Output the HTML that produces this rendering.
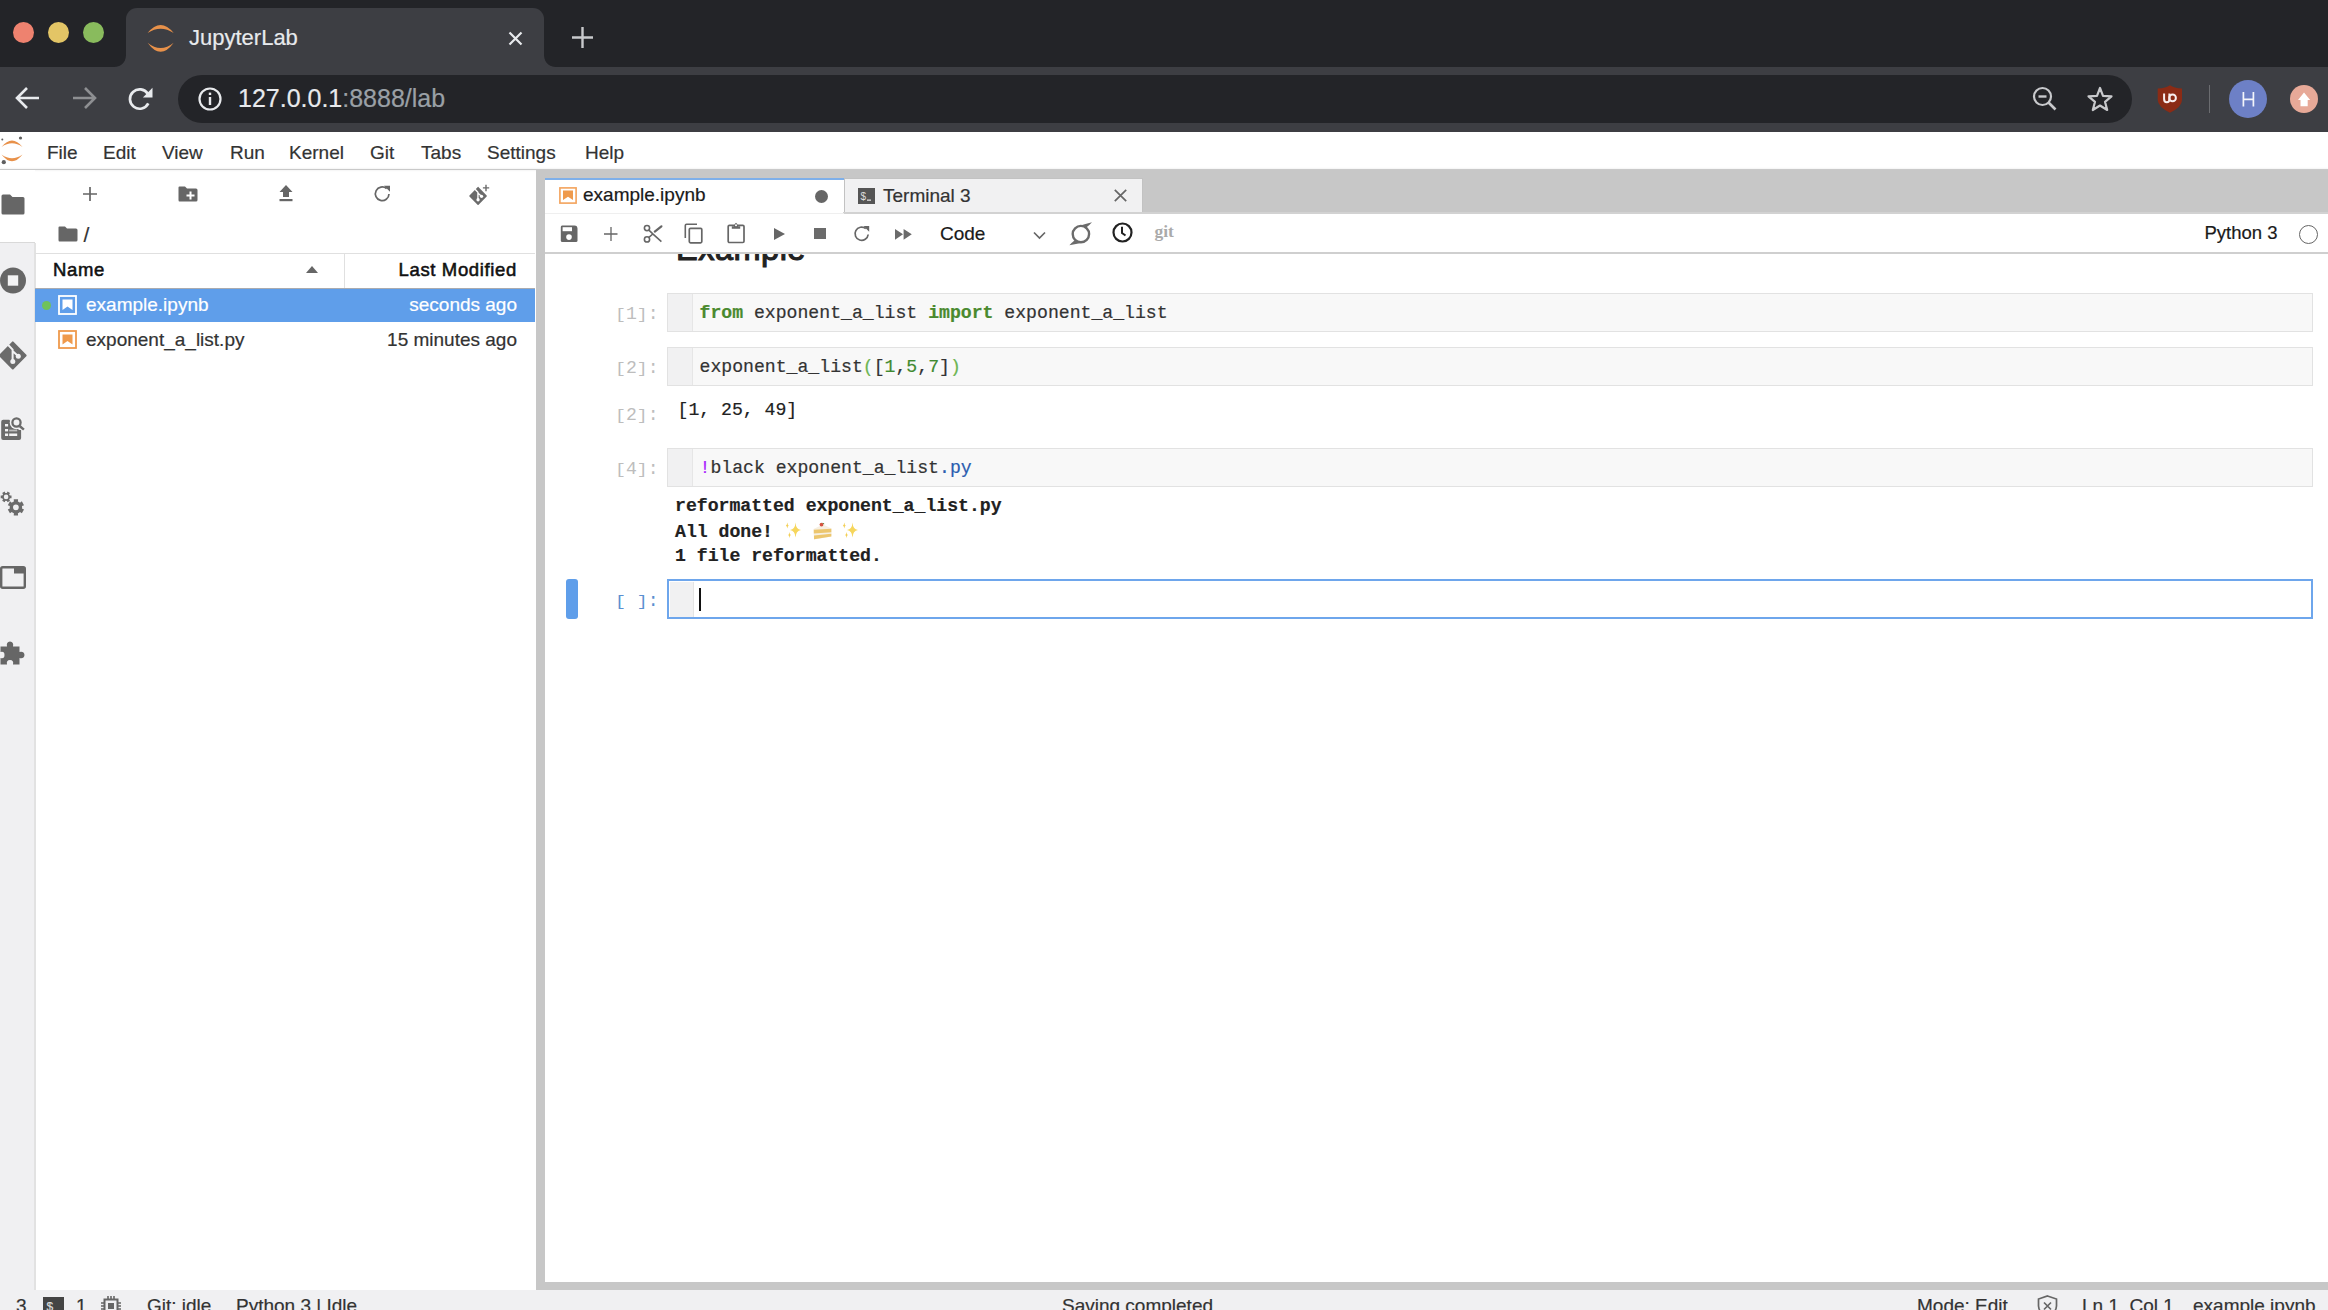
<!DOCTYPE html>
<html><head><meta charset="utf-8">
<style>
*{box-sizing:border-box;margin:0;padding:0}
html,body{width:2328px;height:1310px;overflow:hidden;background:#fff;font-family:"Liberation Sans",sans-serif}
.a{position:absolute}
svg{position:absolute;overflow:visible}
.ui{font-size:19px;color:#333;white-space:pre;line-height:1;-webkit-text-stroke:0.2px currentColor}
.hd{font-size:18.5px;color:#111;letter-spacing:0.65px;-webkit-text-stroke:0.55px #111}
.mono{font-family:"Liberation Mono",monospace;white-space:pre;line-height:1;font-size:18.15px;-webkit-text-stroke:0.2px currentColor}
.pr{color:#bdbdbd;-webkit-text-stroke:0}
.pr b{display:inline-block;font-weight:400;transform:scaleY(0.85);transform-origin:50% 62%}
.box{left:667px;width:1646px;background:#f8f8f8;border:1.4px solid #e2e2e2}
.gut{position:absolute;left:0;top:0;width:25px;height:100%;background:#f1f1f2;border-right:1px solid #e6e6e6}
.code{color:#333}
.kw{color:#4a8a2f;font-weight:700}
.nu{color:#3f8a30}
.br{color:#6cb552}
.out{color:#212121}
</style></head><body>
<!-- ============ CHROME ============ -->
<div class="a" style="left:0;top:0;width:2328px;height:67px;background:#232428"></div>
<!-- traffic lights -->
<div class="a" style="left:12.5px;top:21.5px;width:21px;height:21px;border-radius:50%;background:#ee826f"></div>
<div class="a" style="left:47.5px;top:21.5px;width:21px;height:21px;border-radius:50%;background:#e3c566"></div>
<div class="a" style="left:82.5px;top:21.5px;width:21px;height:21px;border-radius:50%;background:#89bb5d"></div>
<!-- active tab -->
<div class="a" style="left:126px;top:8px;width:418px;height:60px;background:#3d3e43;border-radius:11px 11px 0 0"></div>
<div class="a" style="left:115px;top:56px;width:11px;height:11px;background:radial-gradient(circle 11px at 0 0,#232428 10.4px,#3d3e43 11.2px)"></div>
<div class="a" style="left:544px;top:56px;width:11px;height:11px;background:radial-gradient(circle 11px at 100% 0,#232428 10.4px,#3d3e43 11.2px)"></div>
<svg style="left:146px;top:24px" width="28" height="28" viewBox="0 0 28 28">
 <path d="M1.6 9.1 Q14.6 -6.9 27.7 9.1 Q14.6 0.5 1.6 9.1Z" fill="#e8914a"/>
 <path d="M1.6 18.75 Q14.6 36.85 27.7 18.75 Q14.6 29.45 1.6 18.75Z" fill="#e8914a"/>
</svg>
<div class="a ui" style="left:189px;top:27px;font-size:22px;color:#e8eaed">JupyterLab</div>
<svg style="left:508px;top:31px" width="15" height="15" viewBox="0 0 15 15"><path d="M1.5 1.5L13.5 13.5M13.5 1.5L1.5 13.5" stroke="#e8eaed" stroke-width="2.2"/></svg>
<svg style="left:572px;top:27px" width="21" height="21" viewBox="0 0 21 21"><path d="M10.5 0V21M0 10.5H21" stroke="#c8c9cc" stroke-width="2.4"/></svg>
<!-- toolbar -->
<div class="a" style="left:0;top:67px;width:2328px;height:65px;background:#3d3e43"></div>
<svg style="left:15px;top:86px" width="26" height="24" viewBox="0 0 26 24"><path d="M24 12H3M12 2L2 12L12 22" stroke="#e8eaed" stroke-width="2.6" fill="none"/></svg>
<svg style="left:71px;top:86px" width="26" height="24" viewBox="0 0 26 24"><path d="M2 12H23M14 2L24 12L14 22" stroke="#8e8f92" stroke-width="2.6" fill="none"/></svg>
<svg style="left:127px;top:86px" width="26" height="26" viewBox="0 0 26 26"><path d="M21.3 17.4A9.7 9.7 0 1 1 20.8 7.75" stroke="#e8eaed" stroke-width="2.7" fill="none"/><path d="M25.5 1.8L25.5 11.4L15.9 11.4Z" fill="#e8eaed"/></svg>
<div class="a" style="left:178px;top:75px;width:1954px;height:48px;border-radius:24px;background:#232428"></div>
<svg style="left:198px;top:87px" width="24" height="24" viewBox="0 0 24 24"><circle cx="12" cy="12" r="10.5" stroke="#e8eaed" stroke-width="2.2" fill="none"/><rect x="10.8" y="10" width="2.4" height="8" fill="#e8eaed"/><rect x="10.8" y="5.6" width="2.4" height="2.4" fill="#e8eaed"/></svg>
<div class="a ui" style="left:238px;top:86px;font-size:25px;color:#e8eaed">127.0.0.1<span style="color:#9aa0a6">:8888/lab</span></div>
<svg style="left:2032px;top:86.2px" width="26" height="26" viewBox="0 0 26 26"><circle cx="10.5" cy="10.5" r="8.5" stroke="#c8c9cc" stroke-width="2.2" fill="none"/><path d="M6.5 10.5H14.5" stroke="#c8c9cc" stroke-width="2.4"/><path d="M16.5 16.5L23.5 23.5" stroke="#c8c9cc" stroke-width="2.6"/></svg>
<svg style="left:2087px;top:86px" width="26" height="25" viewBox="0 0 26 25"><path d="M13 2L16 9.8L24.5 10.3L18 15.8L20.2 24L13 19.5L5.8 24L8 15.8L1.5 10.3L10 9.8Z" stroke="#c8c9cc" stroke-width="2.2" fill="none" stroke-linejoin="round"/></svg>
<svg style="left:2157px;top:85px" width="26" height="28" viewBox="0 0 26 28"><path d="M13 0.3Q17 3.4 25 3.4V15Q25 22 13 27.7Q1 22 0.7 15V3.4Q9 3.4 13 0.3Z" fill="#8b2b15"/><path d="M7.1 8.6V14Q7.1 17.3 9.9 17.3Q12.4 17.3 12.4 14V8.6" stroke="#f8eeee" stroke-width="2" fill="none"/><circle cx="15.6" cy="12.9" r="3.3" stroke="#f8eeee" stroke-width="2" fill="none"/></svg>
<div class="a" style="left:2208.5px;top:85px;width:1.5px;height:28px;background:#6b6c70"></div>
<div class="a" style="left:2229.3px;top:80px;width:38px;height:38px;border-radius:50%;background:#6d80c6"></div>
<svg style="left:2242px;top:92px" width="13" height="15" viewBox="0 0 13 15"><path d="M1.4 0V14.5M11.4 0V14.5M1.4 7.3H11.4" stroke="#f4f5fb" stroke-width="1.7"/></svg>
<div class="a" style="left:2290px;top:85px;width:28px;height:28px;border-radius:50%;background:#e7a998"></div>
<svg style="left:2296px;top:91px" width="16" height="16" viewBox="0 0 16 16"><path d="M8 1.4L14.2 9H11.7V15.3H4.5V9H2Z" fill="#fff"/></svg>

<!-- ============ JUPYTERLAB ============ -->
<div id="jl" class="a" style="left:0;top:132px;width:2328px;height:1178px;background:#fff"></div>
<!-- menubar -->
<svg style="left:0;top:136px" width="24" height="30" viewBox="0 0 24 30">
 <path d="M1.5 11 Q12 -2 22.5 11 Q12 3.5 1.5 11Z" fill="#e8914a"/>
 <path d="M1.5 18.5 Q12 32 22.5 18.5 Q12 26 1.5 18.5Z" fill="#e8914a"/>
 <circle cx="20.5" cy="2" r="1.6" fill="#5f5f5f"/><circle cx="2.3" cy="3.5" r="1" fill="#5f5f5f"/><circle cx="3.8" cy="26.2" r="2.1" fill="#5f5f5f"/>
</svg>
<div class="a ui" style="left:47px;top:142.5px;color:#333">File</div>
<div class="a ui" style="left:103px;top:142.5px;color:#333">Edit</div>
<div class="a ui" style="left:162px;top:142.5px;color:#333">View</div>
<div class="a ui" style="left:230px;top:142.5px;color:#333">Run</div>
<div class="a ui" style="left:289px;top:142.5px;color:#333">Kernel</div>
<div class="a ui" style="left:370px;top:142.5px;color:#333">Git</div>
<div class="a ui" style="left:421px;top:142.5px;color:#333">Tabs</div>
<div class="a ui" style="left:487px;top:142.5px;color:#333">Settings</div>
<div class="a ui" style="left:585px;top:142.5px;color:#333">Help</div>
<div class="a" style="left:0;top:169px;width:2328px;height:1px;background:#c9c9c9;box-shadow:0 0 2px #d8d8d8"></div>

<!-- left sidebar -->
<div class="a" style="left:0;top:170px;width:35px;height:1120px;background:#f0f0f2"></div>
<div class="a" style="left:0;top:170px;width:35px;height:73px;background:#fff;border-bottom:1.5px solid #d9d9d9"></div>
<div class="a" style="left:34px;top:243px;width:1.5px;height:1047px;background:#e2e2e2"></div>
<!-- sidebar icons -->
<svg style="left:1px;top:194px" width="24" height="21" viewBox="0 0 24 21"><path d="M2 0.5H9L11.5 3H22Q23.5 3 23.5 4.5V19Q23.5 20.5 22 20.5H2Q0.5 20.5 0.5 19V2Q0.5 0.5 2 0.5Z" fill="#666666"/></svg>
<svg style="left:0;top:267px" width="27" height="27" viewBox="0 0 27 27"><circle cx="13" cy="13.5" r="13" fill="#666666"/><rect x="7.8" y="8.3" width="10.4" height="10.4" fill="#f3f3f4"/></svg>
<svg style="left:0;top:335px" width="30" height="40" viewBox="0 0 30 40"><path d="M12.8 7.4L25.6 20.5L12.8 33.5L0 20.5Z" fill="#6b6b6b" stroke="#6b6b6b" stroke-width="2" stroke-linejoin="round"/><path d="M8 9.8L12.6 14.6V26.4M12.8 16.3L18.3 21.2" stroke="#f0f0f2" stroke-width="2" fill="none"/><circle cx="12.8" cy="26.6" r="2.5" fill="#f0f0f2"/><circle cx="18.3" cy="21.2" r="2.5" fill="#f0f0f2"/></svg>
<svg style="left:0;top:410px" width="30" height="40" viewBox="0 0 30 40"><path d="M1.2 11.8Q1.2 9.8 3.2 9.8H9.2L19 20H21.1V28.1Q21.1 30.1 19.1 30.1H3.2Q1.2 30.1 1.2 28.1Z" fill="#6b6b6b"/><g fill="#f3f3f4"><rect x="5" y="14" width="3.1" height="2.5"/><rect x="5" y="19" width="3.1" height="2.4"/><rect x="5" y="23.5" width="3.1" height="2.5"/><rect x="9.2" y="19.6" width="8" height="1.8" opacity="0.6"/><rect x="9.2" y="23.5" width="8" height="2.5"/></g><circle cx="16.5" cy="12.5" r="6.8" fill="#f3f3f4"/><path d="M19.3 15.6L25 20.4" stroke="#f3f3f4" stroke-width="4.5"/><circle cx="16.5" cy="12.5" r="4.1" stroke="#6b6b6b" stroke-width="2.3" fill="none"/><path d="M19.6 16L23.9 19.6" stroke="#6b6b6b" stroke-width="2.5"/></svg>
<svg style="left:0;top:485px" width="30" height="40" viewBox="0 0 30 40"><path d="M9.56 9.90 L9.89 10.61 L11.51 10.45 L11.51 13.35 L9.89 13.19 L9.56 13.90 L9.11 14.54 L10.06 15.86 L7.55 17.31 L6.88 15.82 L6.10 15.90 L5.32 15.82 L4.65 17.31 L2.14 15.86 L3.09 14.54 L2.64 13.90 L2.31 13.19 L0.69 13.35 L0.69 10.45 L2.31 10.61 L2.64 9.90 L3.09 9.26 L2.14 7.94 L4.65 6.49 L5.32 7.98 L6.10 7.90 L6.88 7.98 L7.55 6.49 L10.06 7.94 L9.11 9.26ZM8.40 11.90A2.3 2.3 0 1 0 3.80 11.90A2.3 2.3 0 1 0 8.40 11.90Z" fill="#6b6b6b" fill-rule="evenodd"/><path d="M19.00 27.67 L17.89 28.17 L18.07 30.41 L13.73 30.41 L13.91 28.17 L12.80 27.67 L11.81 26.96 L9.96 28.24 L7.79 24.47 L9.82 23.51 L9.70 22.30 L9.82 21.09 L7.79 20.13 L9.96 16.36 L11.81 17.64 L12.80 16.93 L13.91 16.43 L13.73 14.19 L18.07 14.19 L17.89 16.43 L19.00 16.93 L19.99 17.64 L21.84 16.36 L24.01 20.13 L21.98 21.09 L22.10 22.30 L21.98 23.51 L24.01 24.47 L21.84 28.24 L19.99 26.96ZM18.80 22.30A2.9 2.9 0 1 0 13.00 22.30A2.9 2.9 0 1 0 18.80 22.30Z" fill="#6b6b6b" fill-rule="evenodd"/></svg>
<svg style="left:0;top:566px" width="26" height="23" viewBox="0 0 26 23"><rect x="1.2" y="1.2" width="23.6" height="20.6" rx="1.5" stroke="#666666" stroke-width="2.4" fill="none"/><rect x="14" y="1" width="11" height="6.5" fill="#666666"/></svg>
<svg style="left:0;top:639px" width="26" height="26" viewBox="0 0 26 26"><path d="M0.5 7.5H7Q6 3 10 2.5Q14 3 13 7.5H19.5V13Q24 12 24.5 16Q24 20 19.5 19V25.5H13Q14 21 10 21Q6 21 7 25.5H0.5V19Q4.5 20 4.5 16Q4.5 12 0.5 13Z" fill="#666666"/></svg>

<!-- file browser -->
<svg style="left:83px;top:187px" width="14" height="14" viewBox="0 0 14 14"><path d="M7 0V14M0 7H14" stroke="#666666" stroke-width="1.7"/></svg>
<svg style="left:178px;top:186px" width="20" height="16" viewBox="0 0 20 16"><path d="M1.5 0.5H7L9 2.5H18Q19.5 2.5 19.5 4V14Q19.5 15.5 18 15.5H1.5Q0.5 15.5 0.5 14V1.5Q0.5 0.5 1.5 0.5Z" fill="#666666"/><path d="M12.5 5.5V13.5M8.5 9.5H16.5" stroke="#fff" stroke-width="2"/></svg>
<svg style="left:279px;top:185px" width="14" height="17" viewBox="0 0 14 17"><path d="M7 0L13.5 7H10V12H4V7H0.5Z" fill="#666666"/><rect x="0.5" y="14" width="13" height="2.2" fill="#666666"/></svg>
<svg style="left:374px;top:185px" width="18" height="17" viewBox="0 0 18 17"><path d="M15 9A6.8 6.8 0 1 1 12.6 3.6" stroke="#666666" stroke-width="1.7" fill="none"/><path d="M10 0.8H16V6.8Z" fill="#666666"/></svg>
<svg style="left:470.3px;top:183.1px" width="26" height="26" viewBox="0 0 26 26"><g transform="scale(0.63)"><path d="M12.8 7.4L25.6 20.5L12.8 33.5L0 20.5Z" fill="#6b6b6b" stroke="#6b6b6b" stroke-width="2.4" stroke-linejoin="round"/><path d="M8 9.8L12.6 14.6V26.4M12.8 16.3L18.3 21.2" stroke="#fff" stroke-width="2.2" fill="none"/><circle cx="12.8" cy="26.6" r="2.6" fill="#fff"/><circle cx="18.3" cy="21.2" r="2.6" fill="#fff"/></g><path d="M16 1.8V8.2M12.9 4.9H19.2" stroke="#6b6b6b" stroke-width="1.4"/></svg>
<svg style="left:57.5px;top:226px" width="20" height="16" viewBox="0 0 20 16"><path d="M1.5 0.5H7L9 2.5H18Q19.5 2.5 19.5 4V14Q19.5 15.5 18 15.5H1.5Q0.5 15.5 0.5 14V1.5Q0.5 0.5 1.5 0.5Z" fill="#666666"/></svg>
<div class="a ui" style="left:83.5px;top:223.5px;color:#333;font-size:21px">/</div>
<div class="a" style="left:35px;top:253px;width:500px;height:1px;background:#e0e0e0"></div>
<div class="a ui hd" style="left:53px;top:261px">Name</div>
<svg style="left:306px;top:266px" width="12" height="7" viewBox="0 0 12 7"><path d="M0 7L6 0L12 7Z" fill="#666666"/></svg>
<div class="a" style="left:344px;top:254px;width:1px;height:34px;background:#e0e0e0"></div>
<div class="a ui hd" style="left:335px;top:261px;width:182px;text-align:right;margin-right:-0.6px">Last Modified</div>
<div class="a" style="left:35px;top:287.5px;width:500px;height:1.5px;background:#a9abb0"></div>
<div class="a" style="left:35px;top:289px;width:500px;height:33px;background:#5f9eea"></div>
<div class="a" style="left:42px;top:301px;width:9px;height:9px;border-radius:50%;background:#6fc25b"></div>
<svg style="left:58px;top:295px" width="19" height="20" viewBox="0 0 19 20"><rect x="1" y="1" width="17" height="18" stroke="#fff" stroke-width="1.8" fill="none"/><path d="M4.5 4.5H14.5V15L9.5 11.5L4.5 15Z" fill="#fff"/></svg>
<div class="a ui" style="left:86px;top:295px;color:#fff">example.ipynb</div>
<div class="a ui" style="left:345px;top:295px;width:172px;text-align:right;color:#fff">seconds ago</div>
<svg style="left:58px;top:330px" width="19" height="19" viewBox="0 0 19 19"><rect x="1" y="1" width="17" height="17" stroke="#ef9a4c" stroke-width="1.8" fill="none"/><path d="M4.5 4.5H14.5V14.5L9.5 11L4.5 14.5Z" fill="#ef9a4c"/></svg>
<div class="a ui" style="left:86px;top:330px;color:#333">exponent_a_list.py</div>
<div class="a ui" style="left:345px;top:330px;width:172px;text-align:right;color:#333">15 minutes ago</div>
<!-- splitter + dock bg -->
<div class="a" style="left:536px;top:170px;width:1792px;height:1120px;background:#c7c7c7"></div>
<!-- doc tabs -->
<div class="a" style="left:545px;top:178px;width:299px;height:36px;background:#fff;border-top:2.6px solid #7eafe9"></div>
<svg style="left:559px;top:187px" width="18" height="17" viewBox="0 0 18 17"><rect x="0.9" y="0.9" width="16.2" height="15.2" stroke="#f3a35c" stroke-width="1.6" fill="none"/><path d="M4 3.5H14V13L9 9.8L4 13Z" fill="#ef9a4c"/></svg>
<div class="a ui" style="left:583px;top:185px;color:#1a1a1a">example.ipynb</div>
<div class="a" style="left:815px;top:190px;width:13px;height:13px;border-radius:50%;background:#666666"></div>
<div class="a" style="left:844px;top:178px;width:299px;height:35px;background:#f1f1f2;border:1px solid #c2c2c2;border-bottom:none"></div>
<svg style="left:858px;top:188px" width="17" height="16" viewBox="0 0 17 16"><rect width="17" height="16" fill="#555"/><text x="2.5" y="12" font-family="Liberation Sans" font-size="10" fill="#ddd">$</text><rect x="9" y="11.5" width="4" height="1.3" fill="#ddd"/></svg>
<div class="a ui" style="left:883px;top:185.6px;color:#333">Terminal 3</div>
<svg style="left:1114px;top:189px" width="13" height="13" viewBox="0 0 13 13"><path d="M0.8 0.8L12.2 12.2M12.2 0.8L0.8 12.2" stroke="#666666" stroke-width="1.7"/></svg>
<div class="a" style="left:843px;top:212px;width:1485px;height:2px;background:#d2d2d2"></div>
<div class="a" style="left:545px;top:213px;width:299px;height:1px;background:#efefef"></div>
<!-- notebook toolbar -->
<div class="a" style="left:545px;top:214px;width:1783px;height:38px;background:#fff"></div>
<div class="a" style="left:545px;top:252px;width:1783px;height:2px;background:#cfcfcf"></div>
<div class="a" style="left:545px;top:254px;width:1783px;height:1028px;background:#fff"></div>
<svg style="left:560px;top:225px" width="18" height="18" viewBox="0 0 18 18"><path d="M2 0.4H14.5Q17.5 0.4 17.5 3.8V15.6Q17.5 17.1 16 17.1H2.3Q0.8 17.1 0.8 15.6V1.9Q0.8 0.4 2 0.4Z" fill="#666666"/><rect x="2.6" y="2.2" width="9.4" height="4" fill="#fff"/><circle cx="9" cy="12.1" r="2.8" fill="#fff"/></svg>
<svg style="left:604px;top:227px" width="14" height="14" viewBox="0 0 14 14"><path d="M7 0V14M0 7H13.5" stroke="#666666" stroke-width="1.3"/></svg>
<svg style="left:643px;top:224px" width="20" height="20" viewBox="0 0 20 20"><circle cx="4" cy="4.1" r="2.6" stroke="#666666" stroke-width="1.6" fill="none"/><circle cx="4" cy="15.4" r="2.6" stroke="#666666" stroke-width="1.6" fill="none"/><path d="M5.9 6.2L9.8 9.9L18.4 17.6M5.9 13.3L9.8 10" stroke="#666666" stroke-width="1.6" fill="none"/><path d="M11.8 7.6L18.4 2.3" stroke="#666666" stroke-width="2.2" stroke-linecap="round"/></svg>
<svg style="left:684px;top:223px" width="20" height="21" viewBox="0 0 20 21"><path d="M1.3 15V2.5Q1.3 1.3 2.5 1.3H13" stroke="#666666" stroke-width="1.6" fill="none"/><rect x="5.3" y="5.3" width="12.5" height="14.5" rx="1.2" stroke="#666666" stroke-width="1.7" fill="none"/></svg>
<svg style="left:727px;top:222px" width="19" height="22" viewBox="0 0 19 22"><rect x="1.2" y="3.4" width="15.8" height="17.1" rx="1.2" stroke="#666666" stroke-width="1.7" fill="none"/><path d="M4.8 6.8V4.2H6.9Q9 -2.8 11.1 4.2H13.2V6.8Z" fill="#666666"/><circle cx="9" cy="3.2" r="1" fill="#fff"/></svg>
<svg style="left:774px;top:228px" width="11" height="12" viewBox="0 0 11 12"><path d="M0 0L11 6L0 12Z" fill="#666666"/></svg>
<div class="a" style="left:814.2px;top:228px;width:11.6px;height:11.2px;background:#6b6b6b"></div>
<svg style="left:853px;top:225px" width="18" height="18" viewBox="0 0 18 18"><path d="M15.2 9.5A6.6 6.6 0 1 1 12.8 3.6" stroke="#666666" stroke-width="1.7" fill="none"/><path d="M10.5 1H16.2V6.7Z" fill="#666666"/></svg>
<svg style="left:895.2px;top:228.5px" width="17" height="11" viewBox="0 0 17 11"><path d="M0 0L8 5.35L0 10.7ZM8.6 0L16.8 5.35L8.6 10.7Z" fill="#6b6b6b"/></svg>
<div class="a ui" style="left:940px;top:223.5px;color:#1a1a1a">Code</div>
<svg style="left:1033px;top:231px" width="13" height="9" viewBox="0 0 13 9"><path d="M1 1.5L6.5 7L12 1.5" stroke="#666666" stroke-width="1.7" fill="none"/></svg>
<svg style="left:1069px;top:222px" width="24" height="24" viewBox="0 0 24 24"><circle cx="11.9" cy="12.1" r="8.2" stroke="#6b6b6b" stroke-width="2.4" fill="none"/><path d="M9 4.2Q15 2.2 23 0.2Q20 3.5 17.5 5.3Z" fill="#6b6b6b"/><path d="M14.6 20.2Q9 21.8 0.4 23.3Q3 20.5 5.5 18.6Z" fill="#6b6b6b"/></svg>
<svg style="left:1112px;top:222px" width="21" height="21" viewBox="0 0 21 21"><circle cx="10.5" cy="10.5" r="9" stroke="#222" stroke-width="2.2" fill="none"/><path d="M10 4.8V11L13.5 13.5" stroke="#222" stroke-width="2" fill="none"/></svg>
<div class="a" style="left:1154.5px;top:223.2px;font-family:'Liberation Serif',serif;font-size:17.5px;color:#aaa;font-weight:700;line-height:1">git</div>
<div class="a ui" style="left:2204.5px;top:223.8px;color:#1a1a1a;font-size:18.5px">Python 3</div>
<div class="a" style="left:2299px;top:224.5px;width:19px;height:19px;border-radius:50%;border:1.7px solid #666666"></div>

<!-- notebook content -->
<div class="a" style="left:545px;top:254px;width:1783px;height:1028px;overflow:hidden">
<div class="a" style="left:131px;top:-21.5px;font-size:32.5px;font-weight:400;color:#222;line-height:1;white-space:pre;letter-spacing:0.5px;-webkit-text-stroke:1.1px #222">Example</div>
</div>
<!-- cell 1 -->
<div class="a mono pr" style="left:615px;top:305px"><b>[</b>1<b>]</b>:</div>
<div class="a box" style="top:293px;height:39px"><div class="gut"></div></div>
<div class="a mono code" style="left:699.5px;top:304.4px"><span class="kw">from</span> exponent_a_list <span class="kw">import</span> exponent_a_list</div>
<!-- cell 2 -->
<div class="a mono pr" style="left:615px;top:358.6px"><b>[</b>2<b>]</b>:</div>
<div class="a box" style="top:346.5px;height:39px"><div class="gut"></div></div>
<div class="a mono code" style="left:699.5px;top:357.9px">exponent_a_list<span class="br">(</span>[<span class="nu">1</span>,<span class="nu">5</span>,<span class="nu">7</span>]<span class="br">)</span></div>
<div class="a mono pr" style="left:615px;top:406.3px"><b>[</b>2<b>]</b>:</div>
<div class="a mono out" style="left:677.5px;top:401.4px">[1, 25, 49]</div>
<!-- cell 4 -->
<div class="a mono pr" style="left:615px;top:460.2px"><b>[</b>4<b>]</b>:</div>
<div class="a box" style="top:448px;height:39px"><div class="gut"></div></div>
<div class="a mono code" style="left:699.5px;top:459.2px"><span style="color:#aa22ff">!</span>black exponent_a_list<span style="color:#2a5db0">.py</span></div>
<div class="a mono out" style="left:675px;top:497.3px;font-weight:700">reformatted exponent_a_list.py</div>
<div class="a mono out" style="left:675px;top:523.2px;font-weight:700">All done!</div>
<svg style="left:785px;top:521px" width="18" height="18" viewBox="0 0 18 18"><path d="M10.5 1.5Q10.9 8.3 16 9Q10.9 9.7 10.5 16.5Q10.1 9.7 5 9Q10.1 8.3 10.5 1.5Z" fill="#f6d65c"/><path d="M2.3 1.5Q2.6 4.2 3.8 4.5Q2.6 4.8 2.3 7.5Q2 4.8 0.8 4.5Q2 4.2 2.3 1.5Z" fill="#f3cf55"/><path d="M4.5 11Q4.8 13.7 5.8 14Q4.8 14.3 4.5 17Q4.2 14.3 3.2 14Q4.2 13.7 4.5 11Z" fill="#f3cf55"/></svg>
<svg style="left:813px;top:522px" width="19" height="18" viewBox="0 0 19 18"><path d="M0.5 7L10 2.5L18.5 6.5V14.5L1 17.5Z" fill="#f6efe2"/><path d="M0.8 7.8L18.3 6.8V10.2L0.8 11.6Z" fill="#ecc66e"/><path d="M1 13.6L18.3 11.8V14.6L1 17.3Z" fill="#ecc66e"/><circle cx="8.5" cy="2.6" r="1.9" fill="#d4533f"/><path d="M9.8 1.2L11.2 1.8" stroke="#5b8a3a" stroke-width="0.9"/></svg>
<svg style="left:842px;top:521px" width="18" height="18" viewBox="0 0 18 18"><path d="M10.5 1.5Q10.9 8.3 16 9Q10.9 9.7 10.5 16.5Q10.1 9.7 5 9Q10.1 8.3 10.5 1.5Z" fill="#f6d65c"/><path d="M2.3 1.5Q2.6 4.2 3.8 4.5Q2.6 4.8 2.3 7.5Q2 4.8 0.8 4.5Q2 4.2 2.3 1.5Z" fill="#f3cf55"/><path d="M4.5 11Q4.8 13.7 5.8 14Q4.8 14.3 4.5 17Q4.2 14.3 3.2 14Q4.2 13.7 4.5 11Z" fill="#f3cf55"/></svg>
<div class="a mono out" style="left:675px;top:547.3px;font-weight:700">1 file reformatted.</div>
<!-- active cell -->
<div class="a" style="left:566px;top:579px;width:12px;height:40px;border-radius:3px;background:#5f9eea"></div>
<div class="a mono pr" style="left:615px;top:592.2px;color:#5b8fd0"><b>[</b> <b>]</b>:</div>
<div class="a" style="left:667px;top:579px;width:1646px;height:40px;border:2.5px solid #6ea6ec;background:#fff"></div>
<div class="a" style="left:669.5px;top:581.5px;width:24px;height:35px;background:#f1f1f2;border-right:1px solid #e4e4e4"></div>
<div class="a" style="left:698.5px;top:588px;width:2px;height:23px;background:#111"></div>

<!-- status bar -->
<div class="a" style="left:0;top:1290px;width:2328px;height:20px;background:#f0f0f2"></div>
<div class="a ui" style="left:16px;top:1295.6px">3</div>
<div class="a" style="left:43px;top:1297px;width:20.5px;height:20px;background:#444"></div>
<div class="a ui" style="left:46.5px;top:1301px;font-size:12px;color:#ddd">$</div>
<div class="a ui" style="left:76px;top:1295.6px">1</div>
<svg style="left:101px;top:1295.5px" width="20" height="20" viewBox="0 0 20 20"><rect x="3.5" y="3.5" width="13" height="13" stroke="#666666" stroke-width="2" fill="none"/><rect x="7" y="7" width="6" height="6" fill="#666666"/><path d="M7 0V3M10 0V3M13 0V3M0 7H3M0 10H3M0 13H3M17 7H20M17 10H20M17 13H20" stroke="#666666" stroke-width="1.6"/></svg>
<div class="a ui" style="left:147px;top:1295.6px">Git: idle</div>
<div class="a ui" style="left:236px;top:1295.6px">Python 3 | Idle</div>
<div class="a ui" style="left:1062px;top:1295.6px">Saving completed</div>
<div class="a ui" style="left:1917px;top:1295.6px">Mode: Edit</div>
<svg style="left:2037px;top:1294.5px" width="21" height="23" viewBox="0 0 21 23"><path d="M10.5 1L19.5 4V11C19.5 16 15 19.5 10.5 21.5C6 19.5 1.5 16 1.5 11V4Z" stroke="#666666" stroke-width="1.7" fill="none"/><path d="M7 7.5L14 14.5M14 7.5L7 14.5" stroke="#666666" stroke-width="1.7"/></svg>
<div class="a ui" style="left:2082px;top:1295.6px">Ln 1, Col 1</div>
<div class="a ui" style="left:2193px;top:1295.6px">example.ipynb</div>
</body></html>
